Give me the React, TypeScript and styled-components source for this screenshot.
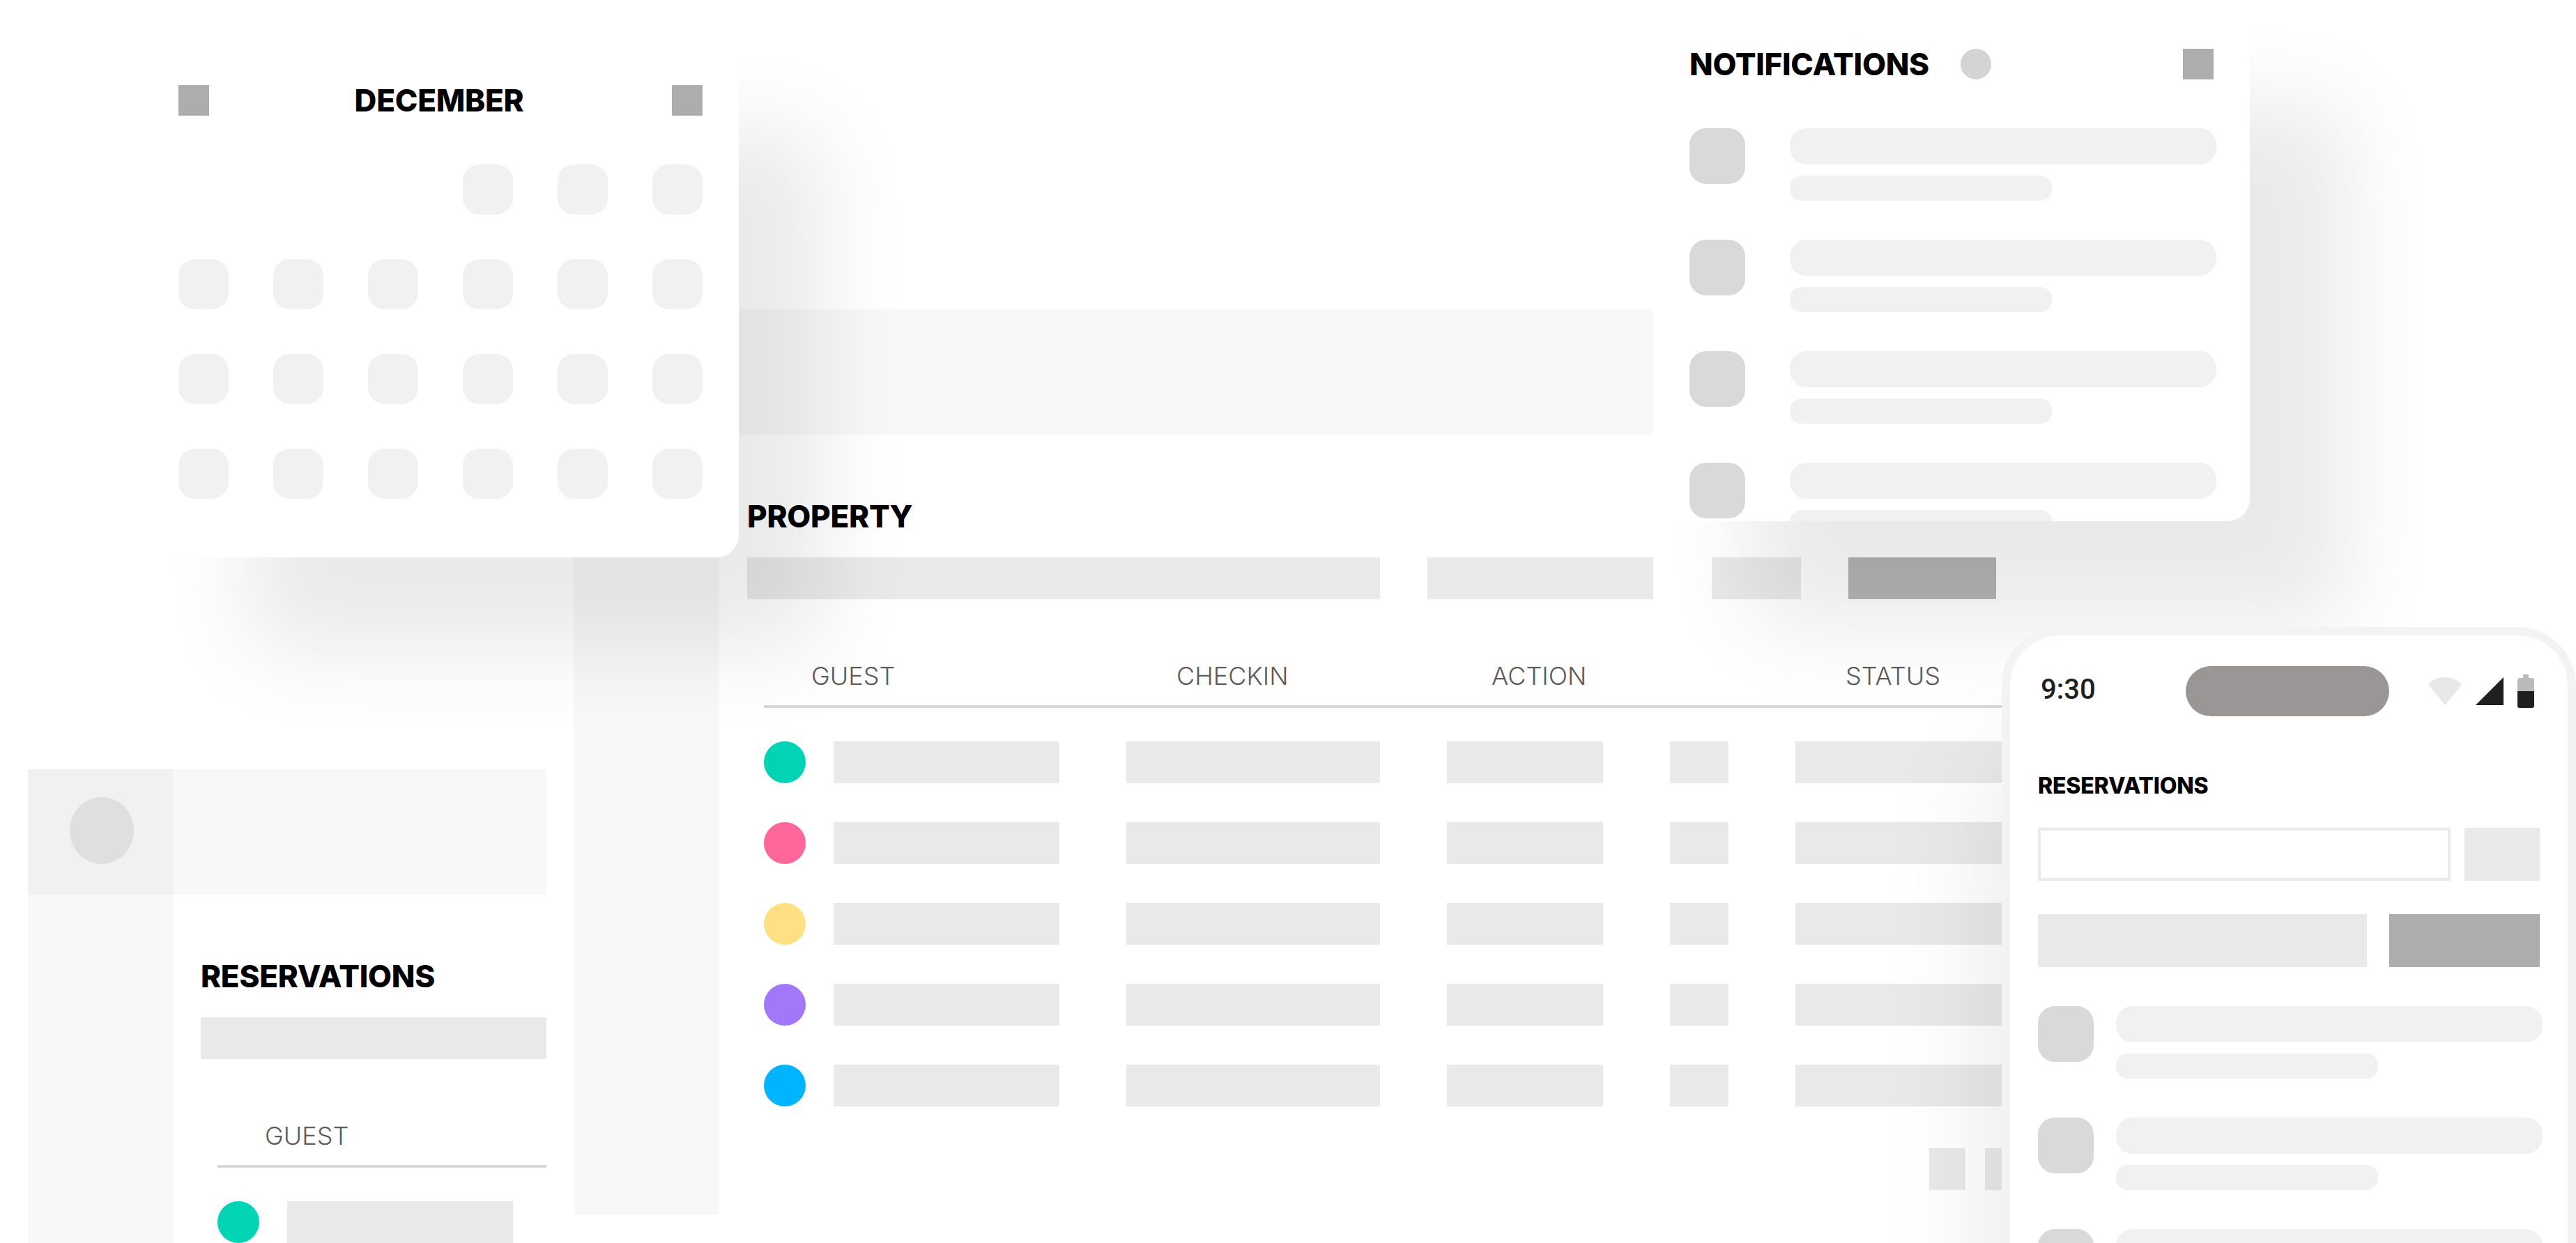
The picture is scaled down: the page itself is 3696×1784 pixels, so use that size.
import styled, { createGlobalStyle } from 'styled-components';

const GlobalStyle = createGlobalStyle`
  html, body {
    margin: 0;
    padding: 0;
    background: #fff;
  }
  * {
    box-sizing: border-box;
  }
`;

const Stage = styled.div`
  position: relative;
  width: 3696px;
  height: 1784px;
  overflow: hidden;
  background: #fff;
  font-family: Inter, 'Liberation Sans', sans-serif;
`;

/* shared bits */
const Title = styled.h2<{ $size?: number }>`
  margin: 0;
  font-size: ${(p) => p.$size ?? 44}px;
  line-height: ${(p) => p.$size ?? 44}px;
  font-weight: 800;
  letter-spacing: -0.006em;
  color: #000;
  white-space: nowrap;
`;

const Block = styled.div<{ $w: number; $h?: number; $color?: string; $ml?: number }>`
  flex: none;
  width: ${(p) => p.$w}px;
  height: ${(p) => p.$h ?? 60}px;
  margin-left: ${(p) => p.$ml ?? 0}px;
  background: ${(p) => p.$color ?? '#e9e9e9'};
`;

const Dot = styled.span<{ $color: string }>`
  flex: none;
  width: 60px;
  height: 60px;
  border-radius: 50%;
  background: ${(p) => p.$color};
`;

const SquareIcon = styled.span`
  flex: none;
  width: 44px;
  height: 44px;
  background: #adadad;
`;

/* app windows in the back */
const AppWindow = styled.section<{ $left: number; $top: number; $w: number }>`
  position: absolute;
  left: ${(p) => p.$left}px;
  top: ${(p) => p.$top}px;
  width: ${(p) => p.$w}px;
`;

const AppHeader = styled.header<{ $w: number }>`
  display: flex;
  width: ${(p) => p.$w}px;
  height: 180px;
  background: #f8f8f8;
`;

const LogoCell = styled.div`
  flex: none;
  display: flex;
  align-items: center;
  justify-content: center;
  width: 208px;
  padding: 0 0 4px 4px;
  background: #f1f1f1;
`;

const Avatar = styled.span`
  width: 92px;
  height: 96px;
  border-radius: 50%;
  background: #dfdfdf;
`;

const AppBody = styled.div`
  display: flex;
`;

const SideBar = styled.aside`
  flex: none;
  width: 208px;
  height: 1120px;
  background: #f8f8f8;
`;

const Main = styled.main`
  flex: 1;
  min-width: 0;
  padding: 95px 0 0 40px;
`;

const FilterRow = styled.div`
  display: flex;
  margin-top: 37px;
`;

const Table = styled.div<{ $w: number }>`
  width: ${(p) => p.$w}px;
  margin: 92px 0 0 24px;
`;

const TableHead = styled.div<{ $cols: string }>`
  display: grid;
  grid-template-columns: ${(p) => p.$cols};
  column-gap: 96px;
  height: 64px;
  border-bottom: 4px solid #d8d8d8;
`;

const HeadCell = styled.span<{ $pad: number }>`
  padding-left: ${(p) => p.$pad}px;
  font-size: 36px;
  line-height: 36px;
  font-weight: 300;
  color: #5c5c5c;
`;

const TableRows = styled.div`
  display: flex;
  flex-direction: column;
  gap: 56px;
  margin-top: 48px;
`;

const TableRow = styled.div<{ $cols: string }>`
  display: grid;
  grid-template-columns: ${(p) => p.$cols};
  column-gap: 96px;
`;

const GuestCell = styled.div`
  display: flex;
  gap: 40px;
`;

const Pagination = styled.div`
  display: flex;
  justify-content: flex-end;
  gap: 28px;
  width: 1804px;
  margin-top: 60px;
`;

/* floating cards */
const FloatCard = styled.section<{ $left: number; $top: number; $w: number; $padL: number; $shadow: string }>`
  position: absolute;
  left: ${(p) => p.$left}px;
  top: ${(p) => p.$top}px;
  width: ${(p) => p.$w}px;
  height: 748px;
  padding: 70px 52px 0 ${(p) => p.$padL}px;
  overflow: hidden;
  border-radius: 32px;
  background: #fff;
  box-shadow: ${(p) => p.$shadow};
`;

const CalendarHeader = styled.div`
  display: flex;
  align-items: center;
  justify-content: space-between;
`;

const CalendarTitle = styled(Title)`
  margin-right: 4px;
`;

const CalendarGrid = styled.div`
  display: grid;
  grid-template-columns: repeat(6, 72px);
  grid-auto-rows: 72px;
  gap: 64px;
  margin-top: 70px;
`;

const DayCell = styled.span<{ $blank?: boolean }>`
  border-radius: 24px;
  background: ${(p) => (p.$blank ? 'transparent' : '#f1f1f1')};
`;

const NotificationHeader = styled.div`
  display: flex;
  align-items: center;
  height: 44px;
`;

const CountDot = styled.span`
  width: 44px;
  height: 44px;
  margin: 0 auto 0 45px;
  border-radius: 50%;
  background: #d4d4d4;
`;

const ListRows = styled.div<{ $mt: number }>`
  display: flex;
  flex-direction: column;
  gap: 56px;
  margin-top: ${(p) => p.$mt}px;
`;

const ListRow = styled.div<{ $gap: number }>`
  display: flex;
  gap: ${(p) => p.$gap}px;
`;

const Thumb = styled.span`
  flex: none;
  width: 80px;
  height: 80px;
  border-radius: 24px;
  background: #d9d9d9;
`;

const Lines = styled.div`
  display: flex;
  flex-direction: column;
  gap: 16px;
`;

const LineLong = styled.span`
  width: 612px;
  height: 52px;
  border-radius: 24px;
  background: #f1f1f1;
`;

const LineShort = styled.span`
  width: 376px;
  height: 36px;
  border-radius: 16px;
  background: #f1f1f1;
`;

/* phone */
const Phone = styled.section`
  position: absolute;
  left: 2872px;
  top: 900px;
  width: 824px;
  height: 1000px;
  padding: 44px 40px 0;
  border: 12px solid #f3f3f3;
  border-radius: 84px;
  background: #fff;
  box-shadow: 0 180px 180px rgba(0, 0, 0, 0.1);
`;

const StatusBar = styled.div`
  display: grid;
  grid-template-columns: 212px 292px 1fr;
  align-items: center;
  height: 72px;
`;

const Clock = styled.span`
  padding: 0 0 5px 4px;
  font-family: Roboto, Inter, sans-serif;
  font-size: 40px;
  line-height: 40px;
  font-weight: 500;
  color: #1f1f1f;
`;

const Island = styled.span`
  height: 72px;
  border-radius: 36px;
  background: #9a9695;
`;

const StatusIcons = styled.div`
  display: flex;
  align-items: center;
  gap: 20px;
  padding-left: 56px;
`;

const PhoneHeading = styled.div`
  margin: 84px 0 44px;
`;

const ToolRow = styled.div<{ $gap: number }>`
  display: flex;
  gap: ${(p) => p.$gap}px;
  margin-bottom: 48px;
`;

const SearchBox = styled.div`
  flex: none;
  width: 592px;
  height: 76px;
  border: 4px solid #e9e9e9;
`;

const guestDots = ['#00d4b4', '#ff6699', '#ffe083', '#a277f9', '#00b4ff'];
const wideCols = '424px 364px 224px 84px 296px';

const AppHeaderBar = ({ w }: { w: number }) => (
  <AppHeader $w={w}>
    <LogoCell>
      <Avatar />
    </LogoCell>
  </AppHeader>
);

const ListItems = ({ count, gap, top }: { count: number; gap: number; top: number }) => (
  <ListRows $mt={top}>
    {Array.from({ length: count }).map((_, i) => (
      <ListRow key={i} $gap={gap}>
        <Thumb />
        <Lines>
          <LineLong />
          <LineShort />
        </Lines>
      </ListRow>
    ))}
  </ListRows>
);

const StatusGlyphs = () => (
  <StatusIcons>
    <svg width="48" height="40" viewBox="0 0 48 40">
      <path d="M0 10.500C6 3.800 14.500 0 24 0s18 3.800 24 10.500L24 40z" fill="#e8e8e8" />
    </svg>
    <svg width="40" height="40" viewBox="0 0 40 40">
      <path d="M40 0v40H0z" fill="#1f1f1f" />
    </svg>
    <svg width="24" height="48" viewBox="0 0 24 48">
      <path d="M8 0h8v5h5a3 3 0 0 1 3 3v16H0V8a3 3 0 0 1 3-3h5z" fill="#bababa" />
      <path d="M0 24h24v21a3 3 0 0 1-3 3H3a3 3 0 0 1-3-3z" fill="#1f1f1f" />
    </svg>
  </StatusIcons>
);

export default function App() {
  return (
    <Stage>
      <GlobalStyle />

      <AppWindow $left={824} $top={444} $w={2100}>
        <AppHeaderBar w={1548} />
        <AppBody>
          <SideBar />
          <Main>
            <Title>PROPERTY</Title>
            <FilterRow>
              <Block $w={908} />
              <Block $w={324} $ml={68} />
              <Block $w={128} $ml={84} />
              <Block $w={212} $ml={68} $color="#b5b5b5" />
            </FilterRow>
            <Table $w={1776}>
              <TableHead $cols={wideCols}>
                <HeadCell $pad={68}>GUEST</HeadCell>
                <HeadCell $pad={72}>CHECKIN</HeadCell>
                <HeadCell $pad={64}>ACTION</HeadCell>
                <span />
                <HeadCell $pad={72}>STATUS</HeadCell>
              </TableHead>
              <TableRows>
                {guestDots.map((color) => (
                  <TableRow key={color} $cols={wideCols}>
                    <GuestCell>
                      <Dot $color={color} />
                      <Block $w={324} />
                    </GuestCell>
                    <Block $w={364} />
                    <Block $w={224} />
                    <Block $w={84} />
                    <Block $w={296} />
                  </TableRow>
                ))}
              </TableRows>
              <Pagination>
                <Block $w={52} />
                <Block $w={52} />
              </Pagination>
            </Table>
          </Main>
        </AppBody>
      </AppWindow>

      <AppWindow $left={40} $top={1104} $w={744}>
        <AppHeaderBar w={744} />
        <AppBody>
          <SideBar />
          <Main>
            <Title>RESERVATIONS</Title>
            <FilterRow>
              <Block $w={496} />
            </FilterRow>
            <Table $w={472}>
              <TableHead $cols="1fr">
                <HeadCell $pad={68}>GUEST</HeadCell>
              </TableHead>
              <TableRows>
                <GuestCell>
                  <Dot $color={guestDots[0]} />
                  <Block $w={324} />
                </GuestCell>
              </TableRows>
            </Table>
          </Main>
        </AppBody>
      </AppWindow>

      <FloatCard $left={236} $top={52} $w={824} $padL={20} $shadow="120px 135px 130px rgba(0, 0, 0, 0.085)">
        <CalendarHeader>
          <SquareIcon />
          <CalendarTitle>DECEMBER</CalendarTitle>
          <SquareIcon />
        </CalendarHeader>
        <CalendarGrid>
          {Array.from({ length: 24 }).map((_, i) => (
            <DayCell key={i} $blank={i < 3} />
          ))}
        </CalendarGrid>
      </FloatCard>

      <FloatCard $left={2372} $top={0} $w={856} $padL={52} $shadow="140px 150px 130px rgba(0, 0, 0, 0.085)">
        <NotificationHeader>
          <Title>NOTIFICATIONS</Title>
          <CountDot />
          <SquareIcon />
        </NotificationHeader>
        <ListItems count={4} gap={64} top={70} />
      </FloatCard>

      <Phone>
        <StatusBar>
          <Clock>9:30</Clock>
          <Island />
          <StatusGlyphs />
        </StatusBar>
        <PhoneHeading>
          <Title $size={32}>RESERVATIONS</Title>
        </PhoneHeading>
        <ToolRow $gap={20}>
          <SearchBox />
          <Block $w={108} $h={76} />
        </ToolRow>
        <ToolRow $gap={32}>
          <Block $w={472} $h={76} />
          <Block $w={216} $h={76} $color="#adadad" />
        </ToolRow>
        <ListItems count={3} gap={32} top={56} />
      </Phone>
    </Stage>
  );
}
